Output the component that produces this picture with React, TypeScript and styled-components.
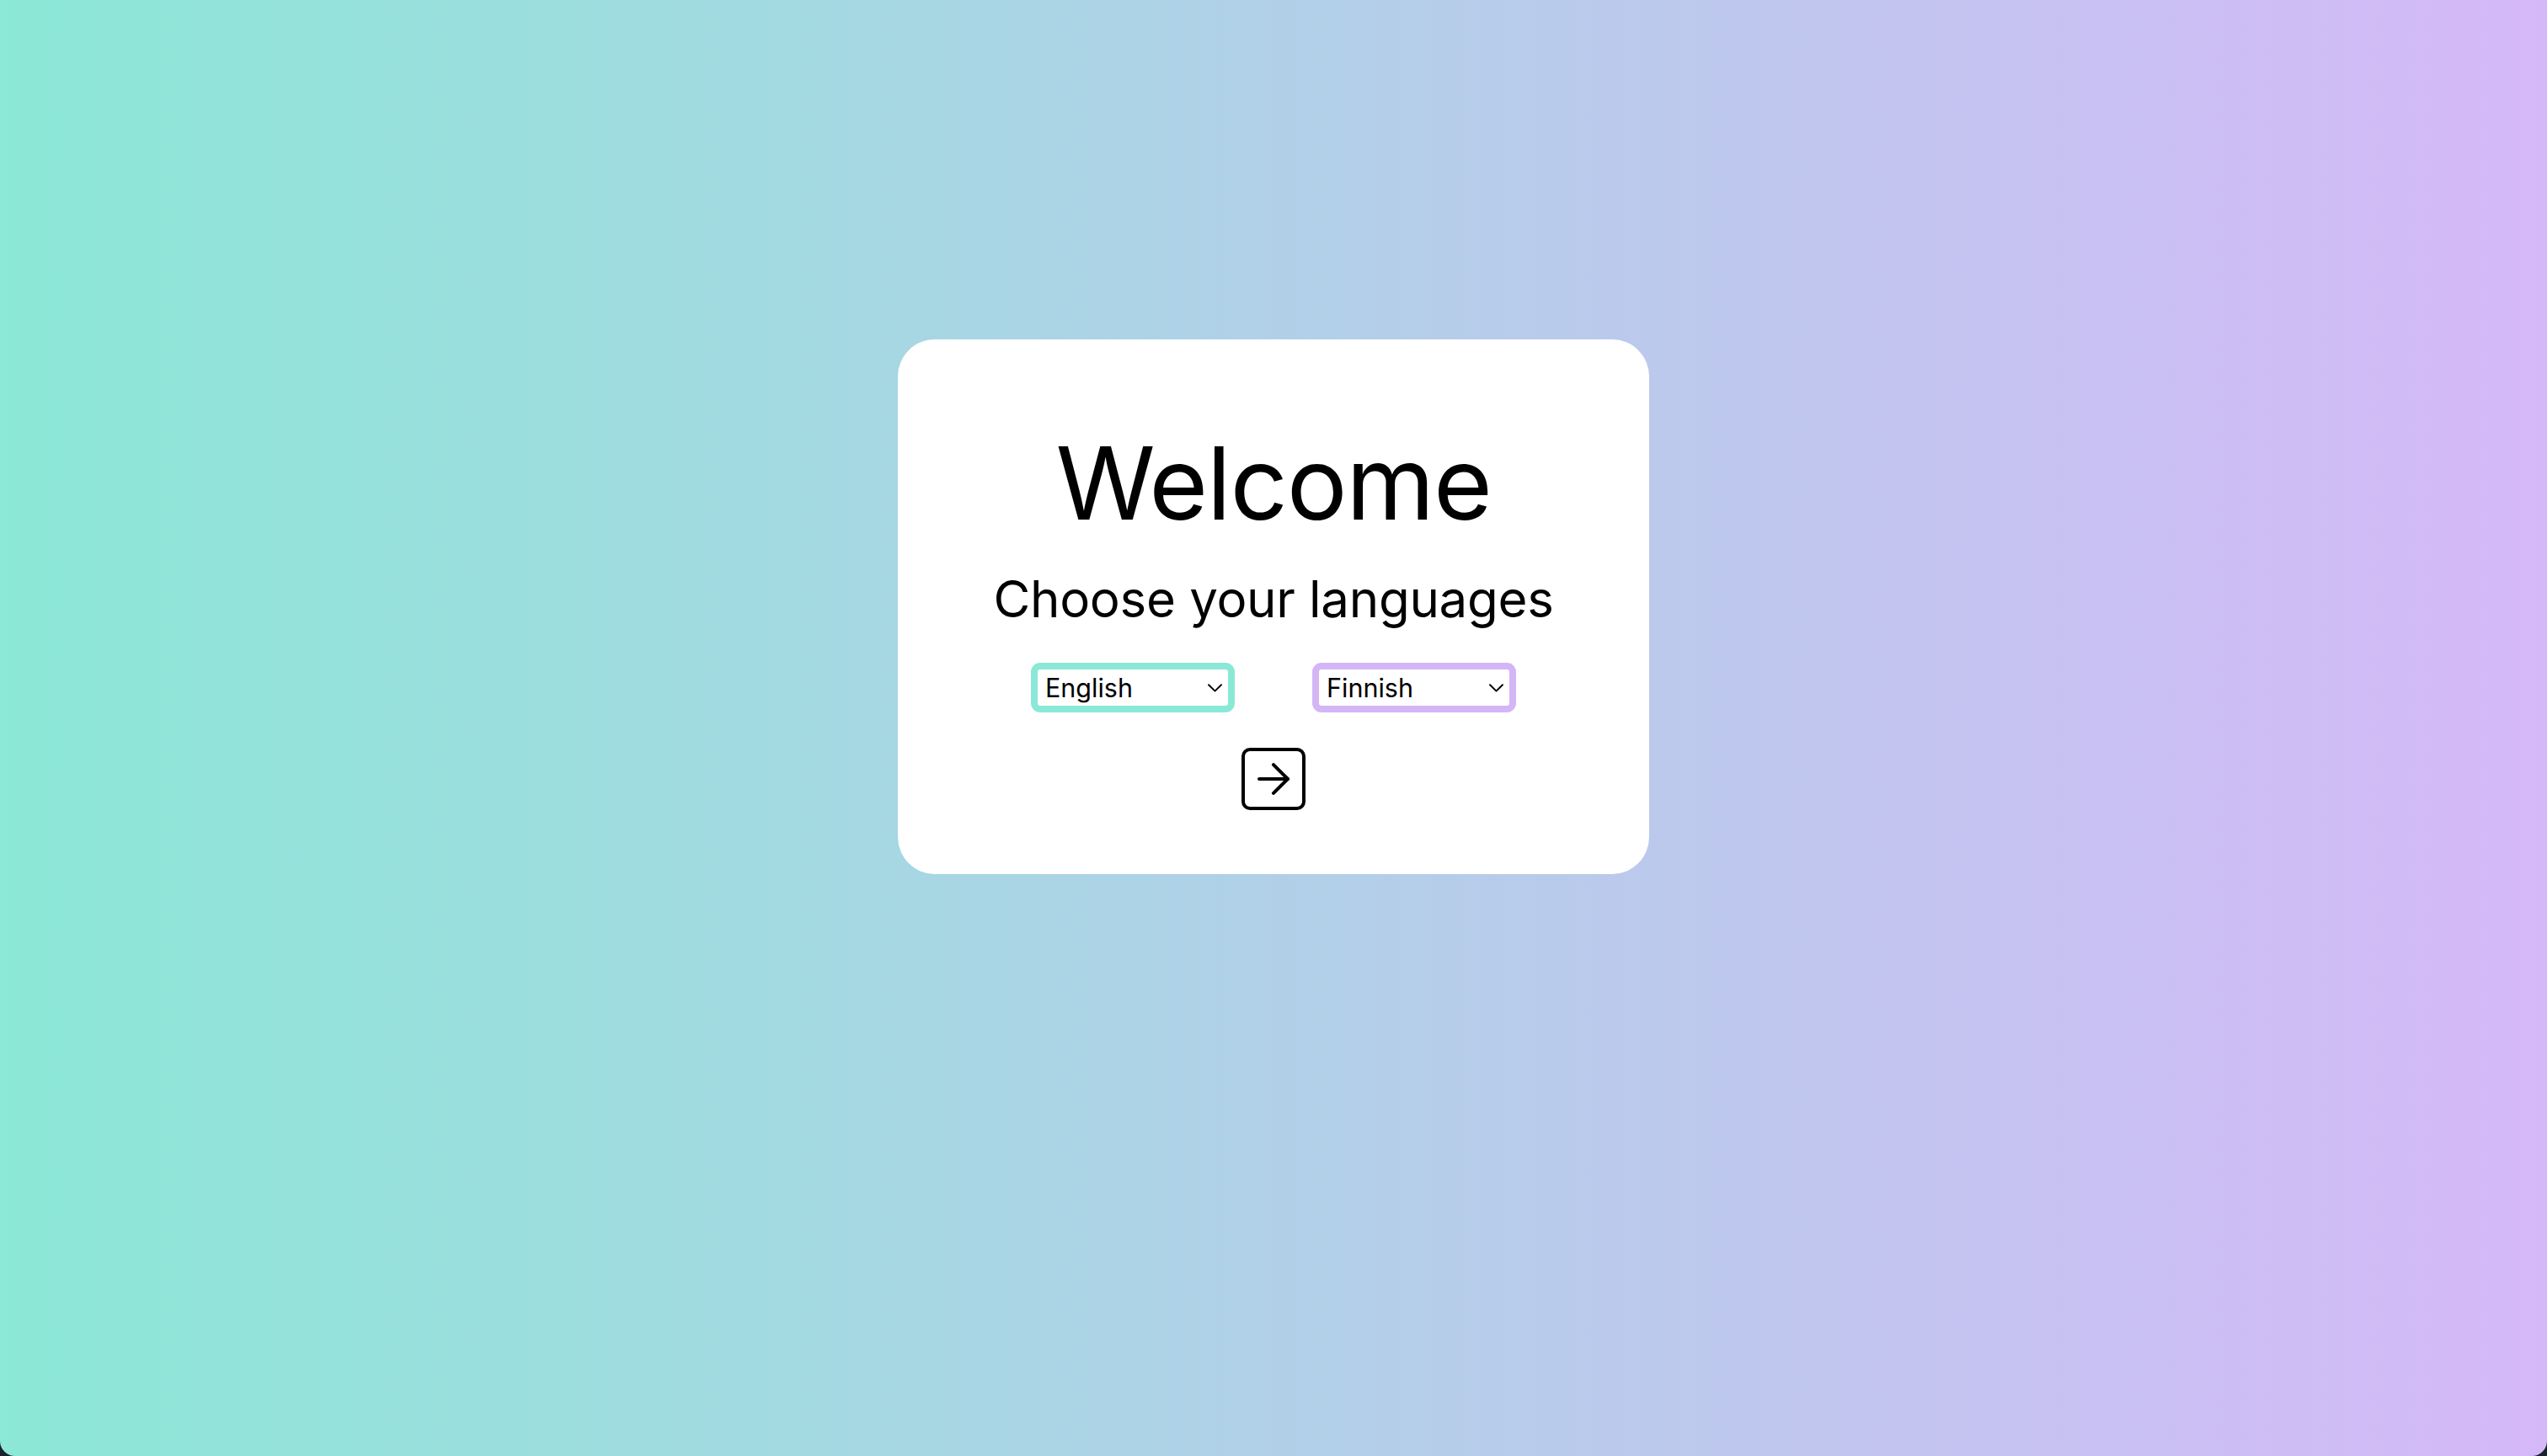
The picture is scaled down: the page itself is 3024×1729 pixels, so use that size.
import React from "react";
import styled, { createGlobalStyle } from "styled-components";

const GlobalStyle = createGlobalStyle`
  html, body {
    margin: 0;
    padding: 0;
    background: #1b2230;
  }
  body {
    font-family: Inter, "Noto Sans", "Liberation Sans", sans-serif;
  }
  * { box-sizing: border-box; }
`;

const Page = styled.div`
  min-height: 100vh;
  display: flex;
  flex-direction: column;
  align-items: center;
  padding-top: 403px;
  background: linear-gradient(90deg, #8ce8d7 0%, #d5b8f8 100%);
  border-radius: 0 0 18px 18px;
`;

const Card = styled.div`
  width: 892px;
  background: #ffffff;
  border-radius: 44px;
  padding: 99px 0 76px;
  display: flex;
  flex-direction: column;
  align-items: center;
`;

const Title = styled.h1`
  margin: 0;
  font-family: Inter, "Noto Sans", sans-serif;
  font-weight: 400;
  font-size: 120px;
  line-height: 144px;
  letter-spacing: -1.4px;
  color: #000;
`;

const Subtitle = styled.h2`
  margin: 29px 0 0;
  font-family: Inter, "Noto Sans", sans-serif;
  font-weight: 400;
  font-size: 60px;
  line-height: 72px;
  letter-spacing: -0.3px;
  color: #000;
`;

const SelectRow = styled.div`
  margin-top: 40px;
  display: flex;
  gap: 92px;
`;

const SelectWrap = styled.div`
  position: relative;
  width: 242px;
  height: 59px;
`;

const Select = styled.select<{ $accent: string }>`
  appearance: none;
  -webkit-appearance: none;
  width: 100%;
  height: 100%;
  border: 8px solid ${(p) => p.$accent};
  border-radius: 11px;
  background: #fff;
  padding: 0 30px 0 9px;
  font-family: Inter, "Noto Sans", sans-serif;
  font-size: 30.5px;
  color: #000;
  outline: none;
`;

const Chevron = styled.svg`
  position: absolute;
  right: 15px;
  top: 25px;
  width: 17px;
  height: 10px;
  pointer-events: none;
`;

const NextButton = styled.button`
  margin-top: 42px;
  width: 76px;
  height: 74px;
  border: 4px solid #000;
  border-radius: 10px;
  background: #fff;
  padding: 0;
  display: flex;
  align-items: center;
  justify-content: center;
  cursor: pointer;
`;

const ArrowIcon = styled.svg`
  width: 58px;
  height: 58px;
  flex: none;
`;

const LangSelect: React.FC<{ accent: string; value: string }> = ({ accent, value }) => (
  <SelectWrap>
    <Select $accent={accent} defaultValue={value}>
      <option value="English">English</option>
      <option value="Finnish">Finnish</option>
      <option value="Swedish">Swedish</option>
      <option value="German">German</option>
      <option value="French">French</option>
      <option value="Spanish">Spanish</option>
    </Select>
    <Chevron viewBox="0 0 17 10" fill="none">
      <path d="M1 1.2 8.5 8.6 16 1.2" stroke="#000" strokeWidth="1.9" strokeLinecap="round" strokeLinejoin="round" />
    </Chevron>
  </SelectWrap>
);

export default function App() {
  return (
    <>
      <GlobalStyle />
      <Page>
        <Card>
          <Title>Welcome</Title>
          <Subtitle>Choose your languages</Subtitle>
          <SelectRow>
            <LangSelect accent="#8ae8d7" value="English" />
            <LangSelect accent="#d4b6f7" value="Finnish" />
          </SelectRow>
          <NextButton aria-label="Continue">
            <ArrowIcon viewBox="0 0 24 24" fill="none" stroke="#000" strokeWidth="1.7" strokeLinecap="round" strokeLinejoin="round">
              <path d="M5 12h14" />
              <path d="m12 5 7 7-7 7" />
            </ArrowIcon>
          </NextButton>
        </Card>
      </Page>
    </>
  );
}
